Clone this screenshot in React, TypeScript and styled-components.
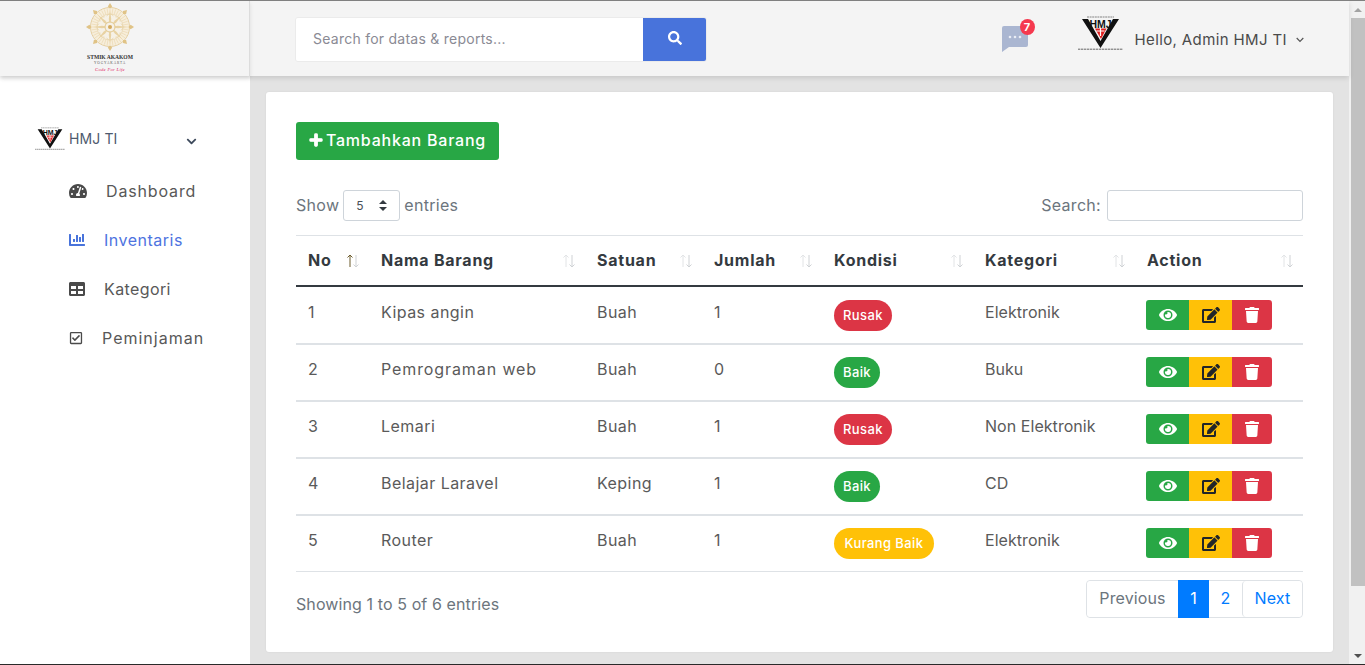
import React from "react";
import styled, { createGlobalStyle } from "styled-components";
import { FaTachometerAlt, FaChartBar, FaTable, FaRegCheckSquare, FaPlus, FaEye, FaEdit, FaTrash, FaSearch, FaChevronDown } from "react-icons/fa";

const FONT = `"Inter", "Open Sans", "Liberation Sans", sans-serif`;

const Global = createGlobalStyle`
  html, body { margin: 0; padding: 0; height: 100%; overflow: hidden; }
  body { font-family: ${FONT}; color: #555; background: #e3e3e3; }
  * { box-sizing: border-box; }
`;

const Screen = styled.div`
  width: 1365px; height: 665px; display: flex; overflow: hidden;
  border-top: 1px solid #808080; border-bottom: 1px solid #2a2a2a;
`;
const Page = styled.div`
  width: 1349px; display: flex; flex-direction: column; background: #e3e3e3;
`;
const ScrollTrack = styled.div`
  width: 16px; background: #f1f1f1; display: flex; flex-direction: column; padding-left: 2px;
`;
const ScrollBtn = styled.div<{ $down?: boolean }>`
  height: 17px; display: flex; align-items: center; justify-content: center;
  &::after {
    content: ""; width: 0; height: 0; border-left: 4px solid transparent; border-right: 4px solid transparent;
    ${p => p.$down ? "border-top: 4px solid #505050;" : "border-bottom: 4px solid #a3a3a3;"}
  }
`;
const ScrollThumb = styled.div`
  height: 568px; background: #c1c1c1;
`;
const ScrollRest = styled.div`flex: 1;`;

const Header = styled.header`
  height: 75px; flex: none; display: flex; align-items: stretch; background: #f4f4f4;
  box-shadow: 0 2px 5px rgba(0,0,0,.12); position: relative; z-index: 2;
`;
const Brand = styled.div`
  width: 250px; flex: none; border-right: 1px solid #dcdcdc; display: flex; justify-content: center;
  padding-right: 30px; box-shadow: 0 2px 4px rgba(0,0,0,.1);
`;
const SearchGroup = styled.form`
  margin: 16px 0 0 45px; width: 412px; height: 45px; display: flex; border: 1px solid #ebebeb; border-radius: 3px; overflow: hidden;
`;
const SearchInput = styled.div`
  flex: 1; background: #fff; padding: 0 0 2px 17px; font-size: 14px; color: #8a8a94; display: flex; align-items: center; letter-spacing: .25px;
`;
const SearchBtn = styled.div`
  width: 63px; background: #4873db; color: #fff; display: flex; align-items: center; justify-content: center; font-size: 14px; padding-bottom: 3px;
`;
const HeaderRight = styled.div`
  margin-left: auto; display: flex; align-items: flex-start; padding-right: 45px;
`;
const Bubble = styled.div`
  position: relative; margin: 25px 50px 0 0; width: 26px; height: 26px;
`;
const BadgeCount = styled.span`
  position: absolute; left: 18px; top: -7px; width: 15px; height: 16px; border-radius: 50%; background: #f5394f; color: #fff;
  font-size: 11px; font-weight: 700; display: flex; align-items: center; justify-content: center;
`;
const UserLogo = styled.div`
  margin-top: 15px; width: 45px; height: 36px;
`;
const Hello = styled.div`
  margin: 27px 0 0 12px; font-size: 15px; color: #4a4a4a; letter-spacing: .38px; display: flex; align-items: center; gap: 9px; height: 22px; white-space: nowrap;
`;
const SmallChevron = styled.svg`width: 8px; height: 6px; margin-top: 1px;`;

const Body = styled.div`flex: 1; display: flex; min-height: 0;`;
const Sidebar = styled.aside`
  width: 250px; flex: none; background: #fff; padding-top: 50px;
`;
const OrgRow = styled.div`
  display: flex; align-items: center; padding-left: 35px; height: 24px; font-size: 14px; color: #4e5a6e;
`;
const OrgName = styled.span`margin-left: 4px; width: 117px; letter-spacing: .1px;`;
const OrgChevron = styled(FaChevronDown)`font-size: 11px; color: #3d4a5c; margin-top: 6px;`;
const NavList = styled.nav`margin-top: 16px; display: flex; flex-direction: column; padding-left: 69px;`;
const NavItem = styled.a<{ $active?: boolean; $ls: number }>`
  height: 49px; display: flex; align-items: center; gap: 19px; font-size: 16px; letter-spacing: ${p => p.$ls}px;
  color: ${p => p.$active ? "#4e73df" : "#585858"};
  svg { flex: none; color: ${p => p.$active ? "#4873db" : "#4a4a4a"}; }
`;

const Main = styled.main`flex: 1; padding: 16px 16px 12px; min-width: 0;`;
const Card = styled.section`
  background: #fff; border-radius: 3px; height: 560px; padding: 30px; box-shadow: 0 0 2px rgba(0,0,0,.08);
`;
const AddButton = styled.button`
  height: 38px; width: 203px; border: 0; border-radius: 3px; background: #28a745; color: #fff; font: 500 16px ${FONT};
  display: flex; align-items: center; justify-content: center; gap: 3px; padding: 0 0 3px; letter-spacing: .78px;
  svg { stroke: currentColor; stroke-width: 40; overflow: visible; }
`;
const Controls = styled.div`
  margin-top: 30px; height: 30px; display: flex; align-items: center; justify-content: space-between; font-size: 16px; color: #6c757d; padding-bottom: 1px; letter-spacing: .3px;
`;
const Length = styled.div`display: flex; align-items: center; gap: 4px;`;
const SelectBox = styled.div`
  width: 57px; height: 31px; margin-top: 2px; border: 1px solid #ced4da; border-radius: 3px; display: flex; align-items: center; justify-content: space-between;
  padding: 0 12px; font-size: 12px; color: #495057;
`;
const Stepper = styled.svg`width: 8px; height: 11px;`;
const Filter = styled.div`display: flex; align-items: center; gap: 6px;`;
const FilterInput = styled.div`width: 196px; height: 31px; margin-top: 2px; border: 1px solid #ced4da; border-radius: 3px;`;

const Table = styled.table`
  margin-top: 15px; width: 1007px; border-collapse: collapse; table-layout: fixed; font-size: 16px; color: #555;
`;
const Th = styled.th`
  height: 50px; border-top: 1px solid #dee2e6; border-bottom: 2px solid #343a40; padding: 0 12px; text-align: left; font-weight: 700; color: #343a40;
  position: relative; letter-spacing: .75px;
`;
const Td = styled.td<{ $ls?: number }>`
  height: 57px; border-bottom: 2px solid #dee2e6; padding: 14px 12px 0; color: #5a5a5a; vertical-align: top; letter-spacing: ${p => p.$ls ?? .45}px; white-space: nowrap;
  tr:first-child & { height: 58px; padding-top: 15px; }
  tr:last-child & { border-bottom-width: 1px; }
`;
const SortIcon = styled.svg`
  position: absolute; right: 8px; top: 17px; width: 16px; height: 16px;
`;
const Pill = styled.span<{ $bg: string; $w: number }>`
  display: inline-flex; height: 31px; margin-top: -2px; width: ${p => p.$w}px; border-radius: 16px; align-items: center; justify-content: center;
  background: ${p => p.$bg}; color: #fff; font-size: 13px; font-weight: 500; letter-spacing: .4px;
`;
const ActionGroup = styled.div`display: flex; margin: -2px 0 0 -1px; width: 126px;`;
const ActionBtn = styled.span<{ $bg: string; $fg: string; $w: number; $size: number }>`
  width: ${p => p.$w}px; height: 30px; background: ${p => p.$bg}; color: ${p => p.$fg}; display: flex; align-items: center; justify-content: center; font-size: ${p => p.$size}px;
  &:first-child { border-radius: 3px 0 0 3px; }
  &:last-child { border-radius: 0 3px 3px 0; }
`;
const Footer = styled.div`
  margin-top: 8px; display: flex; justify-content: space-between; align-items: flex-start; font-size: 16px; color: #6c757d;
`;
const Info = styled.div`margin-top: 14px; letter-spacing: .1px;`;
const Pager = styled.div`
  display: flex; height: 38px; border: 1px solid #dee2e6; border-radius: 4px; width: 217px; letter-spacing: .12px;
`;
const PageItem = styled.span<{ $w: number; $active?: boolean; $muted?: boolean; $sep?: boolean }>`
  width: ${p => p.$w}px; display: flex; align-items: center; justify-content: center; margin: ${p => p.$active ? "-1px 0" : "0"};
  padding-bottom: 2px;
  background: ${p => p.$active ? "#007bff" : "#fff"}; color: ${p => p.$active ? "#fff" : p.$muted ? "#6c757d" : "#007bff"};
  border-left: ${p => p.$sep ? "1px solid #dee2e6" : "0"};
  border-radius: ${p => p.$active ? "0" : "4px"};
`;

function Wheel() {
  const spokes = Array.from({ length: 8 }, (_, i) => i * 45);
  const fine = Array.from({ length: 40 }, (_, i) => i * 9);
  return (
    <svg width="60" height="74" viewBox="0 0 60 74" fontFamily="Liberation Serif, serif">
      <circle cx="30" cy="26" r="19" fill="#f7eedb" />
      {fine.map(a => (
        <line key={a} x1="30" y1="7.5" x2="30" y2="13" transform={`rotate(${a} 30 26)`} stroke="#ecdab4" strokeWidth=".7" />
      ))}
      <circle cx="30" cy="26" r="19.5" fill="none" stroke="#e6cf9f" strokeWidth="1" />
      <circle cx="30" cy="26" r="13" fill="#f6f1e6" stroke="#e8d6ae" strokeWidth=".8" />
      {spokes.map(a => (
        <g key={a} transform={`rotate(${a} 30 26)`}>
          <path d="M30 26 L28.8 18 L30 9 L31.2 18 Z" fill="#e8d2a2" />
          <path d="M30 2 L32.2 5.4 L30 7.6 L27.8 5.4 Z" fill="#e0c386" />
          <path d="M26.6 15 Q30 11 33.4 15" fill="none" stroke="#e8d4a8" strokeWidth=".8" />
        </g>
      ))}
      <circle cx="30" cy="26" r="5" fill="#f6f1e6" stroke="#e2c88e" strokeWidth="1" />
      <circle cx="30" cy="26" r="2" fill="#d4aa5e" />
      <text x="30" y="58" textAnchor="middle" fontSize="5.6" fontWeight="700" fill="#333" letterSpacing="-.03">STMIK AKAKOM</text>
      <text x="30" y="63" textAnchor="middle" fontSize="3.4" fill="#555" letterSpacing=".9">YOGYAKARTA</text>
      <text x="30" y="69.5" textAnchor="middle" fontSize="4.6" fontStyle="italic" fill="#e0245e" letterSpacing=".3">Code For Life</text>
    </svg>
  );
}

function HmjLogo({ w, h }: { w: number; h: number }) {
  return (
    <svg width={w} height={h} viewBox="0 0 45 34" fontFamily="Liberation Sans, sans-serif">
      <line x1="9" y1="1" x2="36" y2="1" stroke="#777" strokeWidth=".9" strokeDasharray="2 .6" />
      <path d="M4 3 H10 L22.5 25 L35 3 H41 L22.5 32 Z" fill="#111" />
      <path d="M17 12.5 H28.5 L23 23 Z" fill="#e02020" />
      <path d="M21.9 12 h1.2 v8 h-1.2z M18.5 14.5 h8 v1 h-8z" fill="#fff" />
      <text x="22.6" y="12" textAnchor="middle" fontSize="10.5" fontWeight="700" fill="#111">HMJ</text>
      <line x1="0" y1="33.2" x2="45" y2="33.2" stroke="#666" strokeWidth="1" strokeDasharray="2.4 .6" />
    </svg>
  );
}

const SortArrows = ({ active }: { active?: boolean }) => (
  <SortIcon viewBox="0 0 16 16" fill="none" strokeWidth="1">
    <path d="M5 14 V2 M2.5 4.5 L5 2 L7.5 4.5" stroke={active ? "#6b5a2a" : "#e2e4e6"} />
    <path d="M11 2 V14 M8.5 11.5 L11 14 L13.5 11.5" stroke="#cfd2d5" />
  </SortIcon>
);

const rows = [
  { no: 1, nama: "Kipas angin", namaLs: .45, sat: "Buah", jml: 1, kon: "Rusak", kat: "Elektronik" },
  { no: 2, nama: "Pemrograman web", namaLs: .9, sat: "Buah", jml: 0, kon: "Baik", kat: "Buku" },
  { no: 3, nama: "Lemari", namaLs: .45, sat: "Buah", jml: 1, kon: "Rusak", kat: "Non Elektronik" },
  { no: 4, nama: "Belajar Laravel", namaLs: .45, sat: "Keping", jml: 1, kon: "Baik", kat: "CD" },
  { no: 5, nama: "Router", namaLs: .45, sat: "Buah", jml: 1, kon: "Kurang Baik", kat: "Elektronik" },
];
const pillStyle: Record<string, { bg: string; w: number }> = {
  Rusak: { bg: "#dc3545", w: 58 },
  Baik: { bg: "#28a745", w: 46 },
  "Kurang Baik": { bg: "#ffc107", w: 100 },
};
const cols = [
  ["No", 73], ["Nama Barang", 216], ["Satuan", 117], ["Jumlah", 120], ["Kondisi", 151], ["Kategori", 162], ["Action", 168],
] as const;

export default function App() {
  return (
    <>
      <Global />
      <Screen>
        <Page>
          <Header>
            <Brand><Wheel /></Brand>
            <SearchGroup>
              <SearchInput>Search for datas &amp; reports...</SearchInput>
              <SearchBtn><FaSearch /></SearchBtn>
            </SearchGroup>
            <HeaderRight>
              <Bubble>
                <svg width="26" height="26" viewBox="0 0 26 26">
                  <path d="M2 0 H24 a2 2 0 0 1 2 2 V19 a2 2 0 0 1 -2 2 H7 L0 26 V2 a2 2 0 0 1 2 -2 Z" fill="#aab6d1" />
                  <circle cx="8" cy="11" r="1.3" fill="#e9edf5" /><circle cx="13" cy="11" r="1.3" fill="#e9edf5" /><circle cx="18" cy="11" r="1.3" fill="#e9edf5" />
                </svg>
                <BadgeCount>7</BadgeCount>
              </Bubble>
              <UserLogo><HmjLogo w={45} h={34} /></UserLogo>
              <Hello>Hello, Admin HMJ TI
                <SmallChevron viewBox="0 0 8 6"><path d="M.7 1 L4 4.3 L7.3 1" fill="none" stroke="#555" strokeWidth="1.2" /></SmallChevron>
              </Hello>
            </HeaderRight>
          </Header>
          <Body>
            <Sidebar>
              <OrgRow><HmjLogo w={30} h={23} /><OrgName>HMJ TI</OrgName><OrgChevron /></OrgRow>
              <NavList>
                <NavItem $ls={.85}><FaTachometerAlt size={18} />Dashboard</NavItem>
                <NavItem $active $ls={.5}><FaChartBar size={16} />Inventaris</NavItem>
                <NavItem $ls={.4}><FaTable size={16} />Kategori</NavItem>
                <NavItem $ls={1}><FaRegCheckSquare size={14} />Peminjaman</NavItem>
              </NavList>
            </Sidebar>
            <Main>
              <Card>
                <AddButton><FaPlus size={14} />Tambahkan Barang</AddButton>
                <Controls>
                  <Length>Show
                    <SelectBox>5
                      <Stepper viewBox="0 0 8 11"><path d="M4 0 L8 4 H0 Z M4 11 L0 7 H8 Z" fill="#343a40" /></Stepper>
                    </SelectBox>
                    entries</Length>
                  <Filter>Search:<FilterInput /></Filter>
                </Controls>
                <Table>
                  <colgroup>{cols.map(([n, w]) => <col key={n} width={w} />)}</colgroup>
                  <thead>
                    <tr>{cols.map(([n], i) => <Th key={n}>{n}<SortArrows active={i === 0} /></Th>)}</tr>
                  </thead>
                  <tbody>
                    {rows.map(r => (
                      <tr key={r.no}>
                        <Td>{r.no}</Td><Td $ls={r.namaLs}>{r.nama}</Td><Td>{r.sat}</Td><Td>{r.jml}</Td>
                        <Td><Pill $bg={pillStyle[r.kon].bg} $w={pillStyle[r.kon].w}>{r.kon}</Pill></Td>
                        <Td $ls={.05}>{r.kat}</Td>
                        <Td>
                          <ActionGroup>
                            <ActionBtn $bg="#28a745" $fg="#fff" $w={43} $size={18}><FaEye /></ActionBtn>
                            <ActionBtn $bg="#ffc107" $fg="#212529" $w={43} $size={18}><FaEdit /></ActionBtn>
                            <ActionBtn $bg="#dc3545" $fg="#fff" $w={40} $size={16}><FaTrash /></ActionBtn>
                          </ActionGroup>
                        </Td>
                      </tr>
                    ))}
                  </tbody>
                </Table>
                <Footer>
                  <Info>Showing 1 to 5 of 6 entries</Info>
                  <Pager>
                    <PageItem $w={91} $muted>Previous</PageItem>
                    <PageItem $w={31} $active>1</PageItem>
                    <PageItem $w={33}>2</PageItem>
                    <PageItem $w={60} $sep>Next</PageItem>
                  </Pager>
                </Footer>
              </Card>
            </Main>
          </Body>
        </Page>
        <ScrollTrack>
          <ScrollBtn />
          <ScrollThumb />
          <ScrollRest />
          <ScrollBtn $down />
        </ScrollTrack>
      </Screen>
    </>
  );
}
